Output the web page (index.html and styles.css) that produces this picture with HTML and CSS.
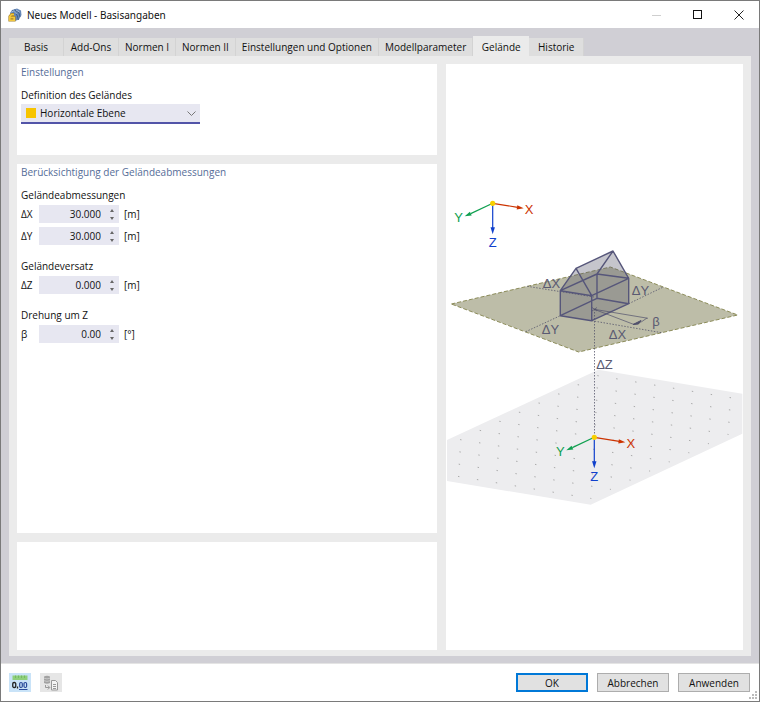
FILE: index.html
```html
<!DOCTYPE html>
<html lang="de">
<head>
  <meta charset="UTF-8">
  <meta name="viewport" content="width=device-width, initial-scale=1.0">
  <title>Neues Modell - Basisangaben</title>
  <link rel="stylesheet" href="styles.css">
</head>
<body>

<div class="window">
  <header class="titlebar">
    <svg class="app-icon" viewBox="0 0 14 14" aria-hidden="true">
      <path d="M2 5 L4 2 L9 0.500 L13 2.500 L13.500 7 L11 11.500 L7 13 L4 9 Z" fill="#6688b8"/>
      <path d="M4 2.500 L9 7 L10.500 12 M6.500 1.500 L11 5 L12 9" fill="none" stroke="#33547f" stroke-width="0.800"/>
      <path d="M3.500 4 L5.500 3 L8.500 6 M8 2 L11.500 4" fill="none" stroke="#b9cbe4" stroke-width="0.800"/>
      <path d="M6 6.500 H3.500 L1.800 8.500 V12.200 H6.200 V9.500 H2" fill="none" stroke="#a8842a" stroke-width="2.800"/>
      <path d="M6 6.500 H3.500 L1.800 8.500 V12.200 H6.200 V9.500 H2" fill="none" stroke="#f2c73c" stroke-width="1.600"/>
    </svg>
    <h1>Neues Modell - Basisangaben</h1>
    <div class="window-controls">
      <button type="button" aria-label="Minimieren" disabled>
        <svg viewBox="0 0 10 10"><path d="M0 5.500 H9" stroke="#cfcfcf"/></svg>
      </button>
      <button type="button" aria-label="Maximieren">
        <svg viewBox="0 0 10 10"><rect x="0.500" y="0.500" width="8" height="8" fill="none" stroke="#111"/></svg>
      </button>
      <button type="button" aria-label="Schließen">
        <svg viewBox="0 0 10 10"><path d="M0.500 0.500 L9.500 9.500 M9.500 0.500 L0.500 9.500" stroke="#222"/></svg>
      </button>
    </div>
  </header>

  <main class="content">
    <div class="tabs" role="tablist">
      <button type="button" role="tab">Basis</button>
      <button type="button" role="tab">Add-Ons</button>
      <button type="button" role="tab">Normen I</button>
      <button type="button" role="tab">Normen II</button>
      <button type="button" role="tab">Einstellungen und Optionen</button>
      <button type="button" role="tab">Modellparameter</button>
      <button type="button" role="tab" class="active" aria-selected="true">Gelände</button>
      <button type="button" role="tab">Historie</button>
    </div>

    <div class="tab-page">
      <div class="column">
        <section class="card settings">
          <h2>Einstellungen</h2>
          <label class="group-label" for="terrain">Definition des Geländes</label>
          <div class="dropdown">
            <span class="swatch"></span>
            <select id="terrain">
              <option>Horizontale Ebene</option>
            </select>
            <svg class="chevron" viewBox="0 0 9 5" aria-hidden="true"><path d="M0.500 0.500 L4.500 4.500 L8.500 0.500" fill="none" stroke="#777"/></svg>
          </div>
        </section>

        <section class="card dimensions">
          <h2>Berücksichtigung der Geländeabmessungen</h2>

          <h3 class="group-label">Geländeabmessungen</h3>
          <div class="field">
            <label for="dx">ΔX</label>
            <div class="spin"><input id="dx" type="text" value="30.000"><span class="arrows"></span></div>
            <span>[m]</span>
          </div>
          <div class="field">
            <label for="dy">ΔY</label>
            <div class="spin"><input id="dy" type="text" value="30.000"><span class="arrows"></span></div>
            <span>[m]</span>
          </div>

          <h3 class="group-label">Geländeversatz</h3>
          <div class="field">
            <label for="dz">ΔZ</label>
            <div class="spin"><input id="dz" type="text" value="0.000"><span class="arrows"></span></div>
            <span>[m]</span>
          </div>

          <h3 class="group-label">Drehung um Z</h3>
          <div class="field">
            <label for="beta">β</label>
            <div class="spin"><input id="beta" type="text" value="0.00"><span class="arrows"></span></div>
            <span>[°]</span>
          </div>
        </section>

        <section class="card empty"></section>
      </div>

      <section class="card preview">
        <svg class="diagram" viewBox="446 197 297 320" role="img" aria-label="Gelände">
          <defs>
            <g id="axes">
              <path d="M0 0 L25 4" stroke="#cc3300" stroke-width="1.200"/>
              <path d="M31 5 L24 6.300 L24.600 2 Z" fill="#cc3300"/>
              <path d="M0 0 L-22 10.300" stroke="#10a050" stroke-width="1.200"/>
              <path d="M-28 13 L-22.800 8.400 L-21 12.200 Z" fill="#10a050"/>
              <path d="M0 0 V25" stroke="#1040cc" stroke-width="1.200"/>
              <path d="M0 31 L-2.200 24 H2.200 Z" fill="#1040cc"/>
              <circle r="2.600" fill="#f8d000"/>
              <text x="36.500" y="10.500" fill="#cc3300">X</text>
              <text x="-34" y="18.500" fill="#10a050">Y</text>
              <text x="0" y="44" fill="#1040cc">Z</text>
            </g>
          </defs>

          <!-- base plane with grid points -->
          <path d="M598.300 369.700 L742.300 393.700 V433.700 L590.700 504.700 L447 481 V440 Z" fill="#ededef"/>
          <path class="grid" d="M597.300 375.600 l190 31.500 M577.700 384.700 l190 31.500 M558.100 393.900 l190 31.500 M538.500 403 l190 31.500 M518.900 412.200 l190 31.500 M499.300 421.300 l190 31.500 M479.700 430.400 l190 31.500 M460.100 439.600 l190 31.500 M440.500 448.700 l190 31.500 M420.900 457.900 l190 31.500 M401.300 467 l190 31.500"/>

          <!-- terrain -->
          <path class="terrain" d="M451.300 304 L610.300 267 L737.700 315 L578.700 352 Z"/>
          <path class="dotted" d="M527.300 286.300 L594 297 M525.700 331.700 L560.300 315.700 M628.700 303.700 L663.300 287 M591.700 320.700 L661.700 332.700 M594.500 309 V437"/>

          <!-- house -->
          <path d="M560.300 315.700 V290.700 L576 268.300 L613 251 L628.700 278.300 V303.700 L591.700 320.700 Z" fill="#58586e" fill-opacity="0.350"/>
          <path class="house" d="M560.300 315.700 L591.700 320.700 L628.700 303.700 L597 298.300 Z M560.300 290.700 L591.700 295.700 L628.700 278.300 L597 274 Z M560.300 315.700 V290.700 L576 268.300 L591.700 295.700 V320.700 M628.700 303.700 V278.300 L613 251 L597 274 V298.300 M576 268.300 L613 251"/>

          <!-- rotation -->
          <path class="thin" d="M594.300 309.300 L648 318.300 M594.300 309.300 L634 324.500 M592 307.500 L597 311 M592 311 L597 307.500 M647 318 Q643 322 634 324.500"/>
          <path d="M633 324.500 L641 320.500 L638.500 324 Z" fill="#50506c" stroke="#50506c"/>

          <use href="#axes" x="492.700" y="203.300"/>
          <use href="#axes" x="594.300" y="437.300"/>

          <g class="dim">
            <text x="551.500" y="288">ΔX</text>
            <text x="640.500" y="295">ΔY</text>
            <text x="550.500" y="334">ΔY</text>
            <text x="617.500" y="339">ΔX</text>
            <text x="656" y="326">β</text>
            <text x="604.500" y="369">ΔZ</text>
          </g>
        </svg>
      </section>
    </div>
  </main>

  <footer class="footer">
    <button type="button" class="tool on" aria-label="Einheiten und Dezimalstellen">
      <svg viewBox="0 0 16 16">
        <rect x="0.500" y="0.500" width="15" height="4.500" fill="#8fd07c"/>
        <path d="M3.500 0.500 V3 M6.500 0.500 V3 M9.500 0.500 V3 M12.500 0.500 V3" stroke="#6db35f" stroke-width="0.800"/>
        <rect x="0.750" y="7.500" width="3" height="5" rx="1.300" fill="none" stroke="#222" stroke-width="1.300"/>
        <path d="M5.500 11.500 V13.500" stroke="#222" stroke-width="1.300"/>
        <rect x="7.700" y="7.500" width="2.600" height="5" rx="1.200" fill="none" stroke="#2a4a9a" stroke-width="1.200"/>
        <rect x="12" y="7.500" width="2.600" height="5" rx="1.200" fill="none" stroke="#2a4a9a" stroke-width="1.200"/>
        <path d="M7 14.500 H15.500" stroke="#2a4a9a"/>
      </svg>
    </button>
    <button type="button" class="tool" aria-label="Vorlage übernehmen">
      <svg viewBox="0 0 16 16">
        <path d="M1 1.500 Q4 0 7 1.500 V8 Q4 9.500 1 8 Z" fill="#a2a2a2"/>
        <path d="M1 3.200 Q4 4.600 7 3.200 M1 5.700 Q4 7.100 7 5.700" fill="none" stroke="#e0e0e0" stroke-width="0.600"/>
        <path d="M2.500 10 V12.500 H6.500 M4.800 10.500 L6.800 12.500 L4.800 14.500" fill="none" stroke="#999"/>
        <path d="M8.500 5.500 H12.500 L14.500 7.500 V15 H8.500 Z" fill="#f4f4f4" stroke="#999"/>
        <path d="M10 9.500 H13 M10 11.500 H13 M10 13.500 H13" stroke="#999"/>
      </svg>
    </button>
    <div class="actions">
      <button type="button" class="default">OK</button>
      <button type="button">Abbrechen</button>
      <button type="button">Anwenden</button>
    </div>
    <svg class="grip" viewBox="0 0 8 8" aria-hidden="true">
      <path d="M6 1 h2 M3 4 h2 M6 4 h2 M0 7 h2 M3 7 h2 M6 7 h2" stroke="#bbb" stroke-width="2"/>
    </svg>
  </footer>
</div>

</body>
</html>
```
FILE: styles.css
```css
* {
  box-sizing: border-box;
}

body {
  margin: 0;
  font-family: "Open Sans", "Noto Sans", sans-serif;
  font-size: 10px;
  line-height: 14px;
  color: #111;
}

button,
input,
select {
  font: inherit;
  color: inherit;
}

h1,
h2,
h3 {
  margin: 0;
  font-size: inherit;
  font-weight: normal;
}

.window {
  position: relative;
  display: flex;
  flex-direction: column;
  min-height: 100vh;
  border: 1px solid #7a7a7a;
  background: #fff;
}

/* title bar */
.titlebar {
  display: flex;
  align-items: center;
  gap: 5px;
  height: 27px;
  padding-left: 7px;
}

.titlebar h1 {
  font-family: "Noto Sans", sans-serif;
}

.app-icon {
  width: 14px;
  height: 14px;
}

.window-controls {
  display: flex;
  margin-left: auto;
}

.window-controls button {
  display: grid;
  place-items: center;
  width: 41px;
  height: 27px;
  padding: 0;
  border: none;
  background: none;
}

.window-controls svg {
  width: 10px;
  height: 10px;
}

/* tabs */
.content {
  flex: 1;
  display: flex;
  flex-direction: column;
  padding: 7px 8px;
  background: #d0cfd5;
}

.tabs {
  display: flex;
  align-items: flex-end;
  height: 21px;
}

.tabs button {
  min-width: 55px;
  height: 18px;
  padding: 0 6px;
  border: none;
  border-right: 1px solid #d3d3d3;
  background: #dedede;
  white-space: nowrap;
}

.tabs .active {
  min-width: 56px;
  height: 20px;
  padding-top: 2px;
  border-right: none;
  background: #ebebeb;
}

.tab-page {
  flex: 1;
  display: grid;
  grid-template-columns: 420fr 297fr;
  gap: 9px;
  padding: 8px 8px 6px;
  background: #ebebeb;
}

.column {
  display: flex;
  flex-direction: column;
  gap: 9px;
}

.card {
  background: #fff;
}

.column .card {
  padding: 1px 4px;
}

.card h2 {
  color: #566d98;
  font-weight: 500;
}

.settings {
  min-height: 91px;
}

.dimensions {
  flex: 1;
}

.empty {
  min-height: 108px;
}

.group-label {
  display: block;
  margin-top: 9px;
}

.field + .group-label {
  margin-top: 14px;
}

/* form controls */
.dropdown {
  display: flex;
  align-items: center;
  width: 179px;
  height: 20px;
  margin-top: 2px;
  padding: 0 4px 0 5px;
  border-bottom: 2px solid #5254a8;
  background: #e7e7f1;
}

.swatch {
  width: 10px;
  height: 10px;
  background: #f7c400;
}

.dropdown select {
  flex: 1;
  padding: 0 4px;
  border: none;
  outline: none;
  appearance: none;
  background: none;
}

.chevron {
  width: 9px;
  height: 5px;
}

.field {
  display: grid;
  grid-template-columns: 18px 80px auto;
  align-items: center;
  margin-top: 4px;
}

.group-label + .field {
  margin-top: 3px;
}

.field > span {
  padding-left: 5px;
}

.spin {
  display: flex;
  align-items: center;
  height: 18px;
  padding-right: 5px;
  background: #e7e7f1;
}

.spin input {
  flex: 1;
  min-width: 0;
  padding: 0 9px 0 0;
  border: none;
  outline: none;
  background: none;
  text-align: right;
}

.arrows::before,
.arrows::after {
  content: "";
  display: block;
  border: 2px solid transparent;
}

.arrows::before {
  border-top: none;
  border-bottom: 3px solid #666;
}

.arrows::after {
  margin-top: 5px;
  border-top: 3px solid #666;
  border-bottom: none;
}

/* preview */
.preview {
  display: flex;
  align-items: center;
}

.diagram {
  width: 100%;
  font-family: "Liberation Sans", sans-serif;
  font-size: 13px;
  text-anchor: middle;
}

.grid {
  fill: none;
  stroke: #aaa;
  stroke-dasharray: 1.4 17.76;
}

.terrain {
  fill: #bdbda8;
  stroke: #8c8c5a;
  stroke-dasharray: 4 2;
}

.dotted {
  fill: none;
  stroke: #55556b;
  stroke-width: 0.8;
  stroke-dasharray: 1.5 1.5;
}

.house {
  fill: none;
  stroke: #56567a;
  stroke-width: 1.4;
  stroke-linejoin: round;
}

.thin {
  fill: none;
  stroke: #50506c;
  stroke-width: 0.7;
}

.dim {
  fill: #5a5a72;
}

/* footer */
.footer {
  display: flex;
  align-items: center;
  gap: 9px;
  height: 38px;
  padding: 0 9px 0 8px;
  border-top: 1px solid #e4e4e4;
}

.tool {
  display: grid;
  place-items: center;
  width: 22px;
  height: 19px;
  padding: 0;
  border: none;
  background: #e6e6e6;
}

.tool.on {
  background: #c9e3f8;
}

.tool svg {
  width: 16px;
  height: 16px;
}

.actions {
  display: flex;
  gap: 9px;
  margin-left: auto;
}

.actions button {
  width: 72px;
  height: 19px;
  padding: 0;
  border: 1px solid #adadad;
  background: #e1e1e1;
}

.actions .default {
  border: 2px solid #0078d7;
}

.grip {
  position: absolute;
  right: 2px;
  bottom: 2px;
  width: 8px;
  height: 8px;
}
```
